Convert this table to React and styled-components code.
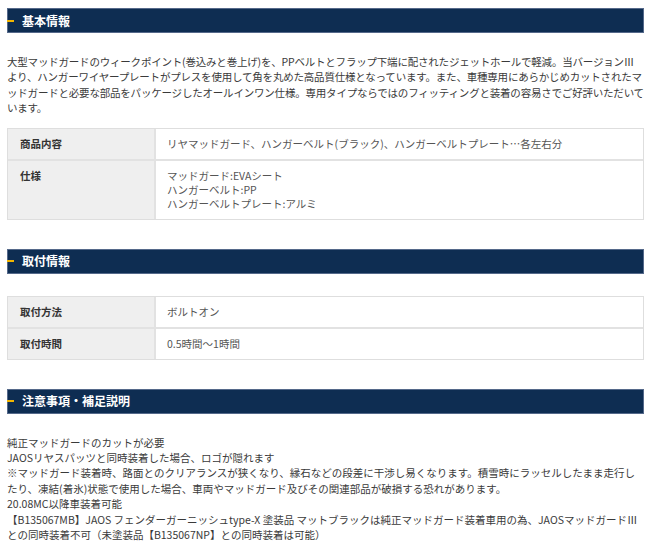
import React from "react";
import styled, { createGlobalStyle } from "styled-components";

const Global = createGlobalStyle`
  html, body { margin: 0; padding: 0; background: #fff; }
  body { font-family: "Noto Sans CJK JP", "Noto Sans", sans-serif; color: #333; }
`;

const Page = styled.div`
  padding: 8px 6px 0 7px;
  display: flex;
  flex-direction: column;
`;

const Section = styled.section`
  display: flex;
  flex-direction: column;
  margin-bottom: ${(p) => p.$mb || 0}px;
`;

const Heading = styled.h2`
  margin: 0;
  height: 25px;
  box-sizing: border-box;
  background: #0e2d52;
  border: 1px solid #55698a;
  display: flex;
  align-items: center;
  gap: 8px;
  color: #fff;
  font-size: 12px;
  font-weight: 700;
  line-height: 1;
  &::before {
    content: "";
    width: 7px;
    height: 2px;
    background: #f2b600;
    margin-left: -1px;
  }
`;

const Body = styled.div`
  font-size: 10.5px;
  letter-spacing: ${(p) => p.$ls || 0}px;
  line-height: 15.4px;
  color: #3a3a3a;
  padding-top: ${(p) => p.$pt || 0}px;
`;

const Para = styled.p`
  margin: 0;
`;

const Table = styled.div`
  display: grid;
  grid-template-columns: 148px 1fr;
  border: 1px solid #dedede;
  margin-top: ${(p) => p.$mt || 0}px;
`;

const Label = styled.div`
  background: #efefef;
  border-right: 2px solid #e2e2e2;
  border-top: ${(p) => (p.$first ? "none" : "2px solid #e2e2e2")};
  padding: 8px 12px 8px;
  font-size: 10.5px;
  font-weight: 700;
  color: #333;
  line-height: 14px;
`;

const Value = styled.div`
  border-top: ${(p) => (p.$first ? "none" : "2px solid #e2e2e2")};
  padding: 8px 11px 8px;
  font-size: 10.5px;
  color: #555;
  line-height: 14px;
`;

const rows1 = [
  ["商品内容", ["リヤマッドガード、ハンガーベルト(ブラック)、ハンガーベルトプレート…各左右分"]],
  ["仕様", ["マッドガード:EVAシート", "ハンガーベルト:PP", "ハンガーベルトプレート:アルミ"]],
];

const rows2 = [
  ["取付方法", ["ボルトオン"]],
  ["取付時間", ["0.5時間～1時間"]],
];

function InfoTable({ rows, mt }) {
  return (
    <Table $mt={mt}>
      {rows.map(([k, v], i) => (
        <React.Fragment key={k}>
          <Label $first={i === 0}>{k}</Label>
          <Value $first={i === 0}>
            {v.map((line) => (
              <div key={line}>{line}</div>
            ))}
          </Value>
        </React.Fragment>
      ))}
    </Table>
  );
}

const notes = [
  "純正マッドガードのカットが必要",
  "JAOSリヤスパッツと同時装着した場合、ロゴが隠れます",
  "※マッドガード装着時、路面とのクリアランスが狭くなり、縁石などの段差に干渉し易くなります。積雪時にラッセルしたまま走行したり、凍結(着氷)状態で使用した場合、車両やマッドガード及びその関連部品が破損する恐れがあります。",
  "20.08MC以降車装着可能",
  "【B135067MB】JAOS フェンダーガーニッシュtype-X 塗装品 マットブラックは純正マッドガード装着車用の為、JAOSマッドガードⅢとの同時装着不可（未塗装品【B135067NP】との同時装着は可能）",
];

export default function App() {
  return (
    <Page>
      <Global />
      <Section $mb={29}>
        <Heading>基本情報</Heading>
        <Body $pt={21} $ls={-0.2}>
          <Para>
            大型マッドガードのウィークポイント(巻込みと巻上げ)を、PPベルトとフラップ下端に配されたジェットホールで軽減。当バージョンⅢより、ハンガーワイヤープレートがプレスを使用して角を丸めた高品質仕様となっています。また、車種専用にあらかじめカットされたマッドガードと必要な部品をパッケージしたオールインワン仕様。専用タイプならではのフィッティングと装着の容易さでご好評いただいています。
          </Para>
        </Body>
        <InfoTable rows={rows1} mt={12} />
      </Section>
      <Section $mb={29}>
        <Heading>取付情報</Heading>
        <InfoTable rows={rows2} mt={22} />
      </Section>
      <Section>
        <Heading>注意事項・補足説明</Heading>
        <Body $pt={21}>
          {notes.map((n) => (
            <Para key={n}>{n}</Para>
          ))}
        </Body>
      </Section>
    </Page>
  );
}
